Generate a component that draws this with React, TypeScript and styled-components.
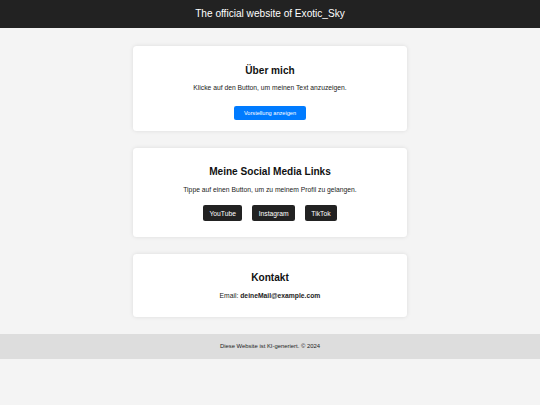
import styled, { createGlobalStyle } from "styled-components";

const GlobalStyle = createGlobalStyle`
  html, body {
    margin: 0;
    padding: 0;
    background: #f4f4f4;
    font-family: "Liberation Sans", Arial, sans-serif;
    color: #333;
  }
`;

const Header = styled.header`
  background: #222;
  color: #fff;
  text-align: center;
  padding: 8.4px 0;
  > h1 {
    margin: 0;
    font-size: 10.1px;
    font-weight: normal;
    line-height: normal;
  }
`;

const Main = styled.main`
  display: flex;
  flex-direction: column;
  align-items: center;
  gap: 17px;
  padding-top: 18.4px;
`;

const Card = styled.section`
  box-sizing: border-box;
  width: 274px;
  padding: 10.5px 10.5px 11.2px;
  background: #fff;
  border-radius: 3.5px;
  box-shadow: 0 0 4px rgba(0, 0, 0, 0.1);
  text-align: center;
  > h2 {
    margin: 8.4px 0;
    font-size: 10.1px;
    color: #111;
  }
  > p {
    margin: 6.75px 0;
    font-size: 6.75px;
    color: #222;
  }
`;

const PrimaryButton = styled.button`
  display: block;
  margin: 14.2px auto -0.7px;
  padding: 4.2px 9.6px;
  border: none;
  border-radius: 2.1px;
  background: #007bff;
  color: #fff;
  font-family: "Liberation Sans", Arial, sans-serif;
  font-size: 5.63px;
  cursor: pointer;
`;

const LinkRow = styled.div`
  display: flex;
  justify-content: center;
  gap: 10.3px;
  margin: 12.6px 0 4.6px;
`;

const SocialButton = styled.a`
  display: inline-block;
  padding: 4.2px 6.2px;
  border-radius: 2.1px;
  background: #222;
  color: #fff;
  font-size: 6.75px;
  line-height: normal;
  text-decoration: none;
  cursor: pointer;
`;

const Footer = styled.footer`
  margin-top: 16.8px;
  padding: 9.5px 0;
  background: #ddd;
  color: #222;
  text-align: center;
  font-size: 5.9px;
`;

const links = [
  { label: "YouTube", href: "#" },
  { label: "Instagram", href: "#" },
  { label: "TikTok", href: "#" },
];

const App = () => {
  return (
    <>
      <GlobalStyle />
      <Header>
        <h1>The official website of Exotic_Sky</h1>
      </Header>
      <Main>
        <Card>
          <h2>Über mich</h2>
          <p>Klicke auf den Button, um meinen Text anzuzeigen.</p>
          <PrimaryButton>Vorstellung anzeigen</PrimaryButton>
        </Card>
        <Card>
          <h2>Meine Social Media Links</h2>
          <p>Tippe auf einen Button, um zu meinem Profil zu gelangen.</p>
          <LinkRow>
            {links.map((l) => (
              <SocialButton key={l.label} href={l.href}>
                {l.label}
              </SocialButton>
            ))}
          </LinkRow>
        </Card>
        <Card>
          <h2>Kontakt</h2>
          <p>
            Email: <strong>deineMail@example.com</strong>
          </p>
        </Card>
      </Main>
      <Footer>Diese Website ist KI-generiert. © 2024</Footer>
    </>
  );
};

export default App;
